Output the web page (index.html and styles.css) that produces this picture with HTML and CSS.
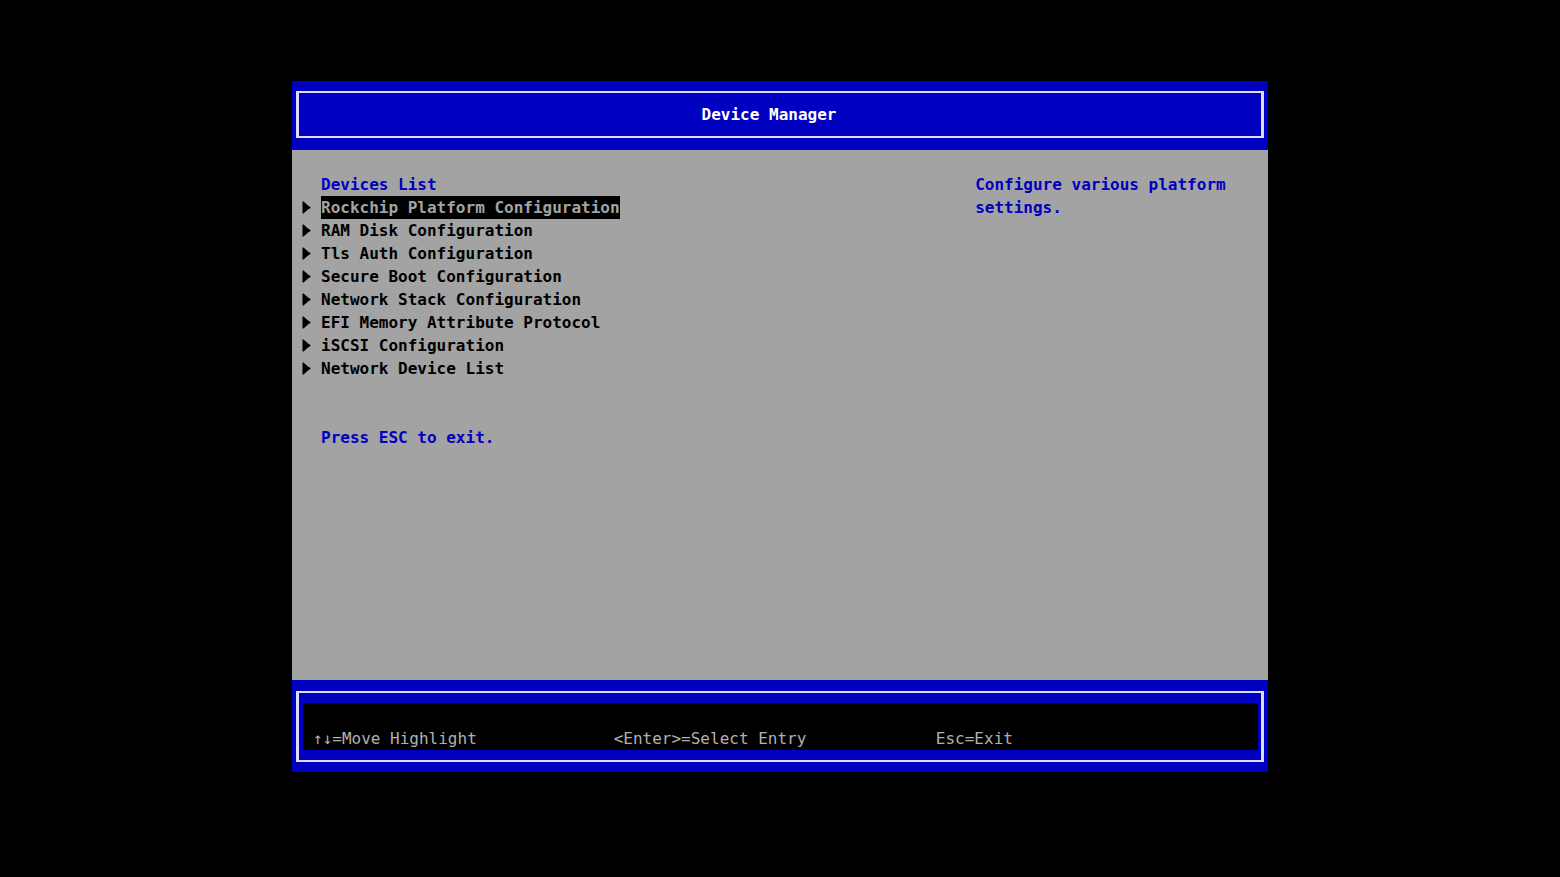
FILE: index.html
```html
<!DOCTYPE html>
<html lang="en">
<head>
    <meta charset="UTF-8">
    <meta name="viewport" content="width=device-width, initial-scale=1.0">
    <title>Device Manager</title>
    <link rel="stylesheet" href="styles.css">
</head>
<body>
    <!-- Marker shared by all menu entries -->
    <svg class="defs" width="0" height="0" aria-hidden="true">
        <symbol id="marker" viewBox="0 0 9 13">
            <path d="M0.5 0.5H1.5L6 4.5L8.5 6V7L6 8.5L1.5 12.5H0.5Z"/>
        </symbol>
    </svg>

    <div class="screen">
        <header class="header">
            <div class="header-box">
                <h1>Device Manager</h1>
            </div>
        </header>

        <main class="content">
            <section class="devices">
                <h2>Devices List</h2>
                <ul class="menu">
                    <li><svg class="marker"><use href="#marker"/></svg><a href="#" class="selected">Rockchip Platform Configuration</a></li>
                    <li><svg class="marker"><use href="#marker"/></svg><a href="#">RAM Disk Configuration</a></li>
                    <li><svg class="marker"><use href="#marker"/></svg><a href="#">Tls Auth Configuration</a></li>
                    <li><svg class="marker"><use href="#marker"/></svg><a href="#">Secure Boot Configuration</a></li>
                    <li><svg class="marker"><use href="#marker"/></svg><a href="#">Network Stack Configuration</a></li>
                    <li><svg class="marker"><use href="#marker"/></svg><a href="#">EFI Memory Attribute Protocol</a></li>
                    <li><svg class="marker"><use href="#marker"/></svg><a href="#">iSCSI Configuration</a></li>
                    <li><svg class="marker"><use href="#marker"/></svg><a href="#">Network Device List</a></li>
                </ul>
                <p class="exit-note">Press ESC to exit.</p>
            </section>
            <aside class="help">Configure various platform settings.</aside>
        </main>

        <footer class="footer">
            <div class="footer-box">
                <div class="keys">
                    <span>↑↓=Move Highlight</span>
                    <span>&lt;Enter&gt;=Select Entry</span>
                    <span>Esc=Exit</span>
                </div>
            </div>
        </footer>
    </div>
</body>
</html>
```
FILE: styles.css
```css
:root {
    --blue: #0000c0;
    --gray: #a3a3a3;
    --frame: #dcdcff;
    --row: 23px;
}
* {
    box-sizing: border-box;
}
body {
    margin: 0;
    padding: 81px 292px 105px;
    min-height: 100vh;
    display: flex;
    background-color: #000;
    color: #000;
    font-family: 'DejaVu Sans Mono', monospace;
    font-size: 16px;
    font-weight: bold;
    line-height: var(--row);
}
h1, h2, p, ul {
    margin: 0;
    padding: 0;
    font-size: 16px;
}
.defs {
    position: absolute;
}
.screen {
    flex: 1;
    display: flex;
    flex-direction: column;
}

/* Title bar */
.header {
    background-color: var(--blue);
    padding: 10px 4px 12px;
}
.header-box {
    border: 2px solid var(--frame);
    border-width: 2px 3px;
    padding: 10px 22px 10px 0;
    text-align: center;
    color: #fff;
}

/* Form area */
.content {
    flex: 1;
    display: grid;
    grid-template-columns: 7fr 3fr;
    background-color: var(--gray);
    padding: var(--row) 0;
}
.devices {
    padding-left: 10px;
}
.devices h2, .exit-note {
    padding-left: 19px;
    color: var(--blue);
}
.menu {
    list-style: none;
}
.menu li {
    display: flex;
    align-items: center;
}
.marker {
    width: 9px;
    height: 13px;
    margin-right: 10px;
}
.menu a {
    color: #000;
    text-decoration: none;
}
.menu a.selected {
    background-color: #000;
    color: var(--gray);
}
.exit-note {
    margin-top: 46px;
}
.help {
    color: var(--blue);
}

/* Key hints */
.footer {
    background-color: var(--blue);
    padding: 11px 4px 10px;
}
.footer-box {
    border: 2px solid var(--frame);
    border-width: 2px 3px;
    padding: 10px 3px 10px 4px;
}
.keys {
    display: grid;
    grid-template-columns: 14fr 15fr 15fr;
    padding: 24px 0 0 10px;
    background-color: #000;
    color: #b0b0b0;
    font-weight: normal;
}
```
